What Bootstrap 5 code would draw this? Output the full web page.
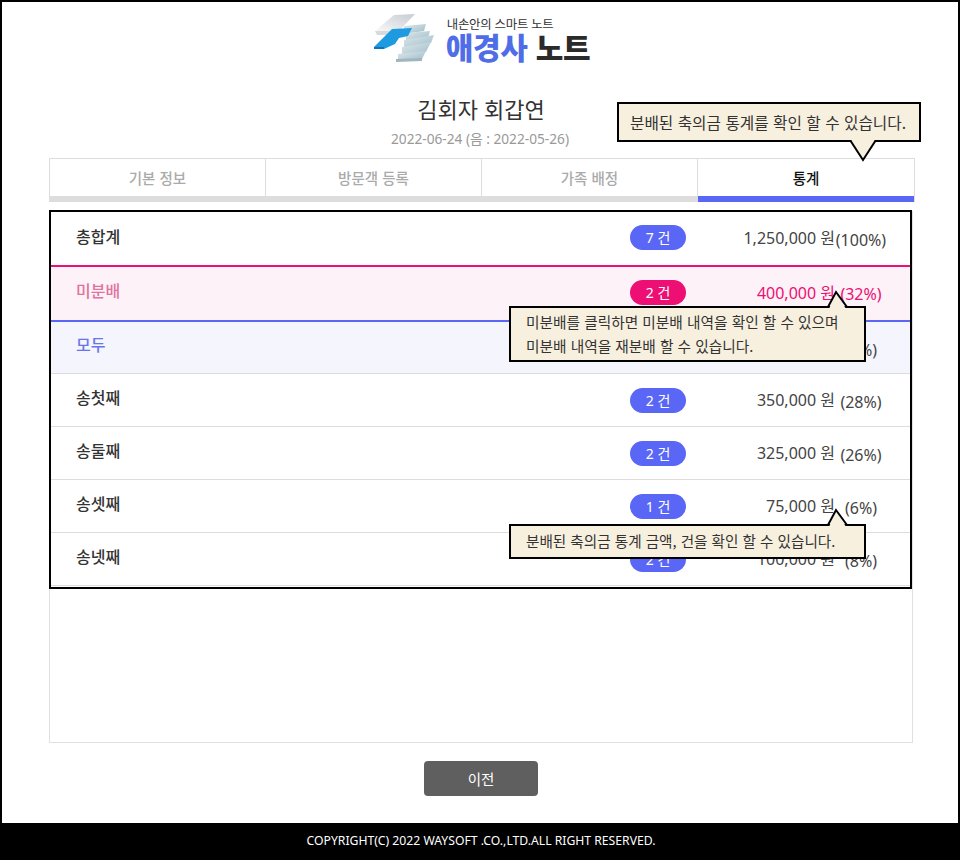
<!DOCTYPE html>
<html lang="ko">
<head>
<meta charset="utf-8">
<title>애경사 노트</title>
<link rel="stylesheet" href="https://cdn.jsdelivr.net/npm/bootstrap@5.3.0/dist/css/bootstrap.min.css">
<style>
html,body{height:860px;overflow:hidden}
body{font-family:"Noto Sans","Noto Sans CJK KR",sans-serif;color:#333;background:#fff}
.shell{position:relative;height:860px;border:solid #000;border-width:2px 2px 0 2px;display:flex;flex-direction:column}
.brand{height:54px;margin-top:10px;gap:9px;padding-left:4px}
.brand-sub{font-size:12.4px;line-height:14px;color:#333;letter-spacing:-.2px;padding-left:1px}
.brand-name{font-size:30px;line-height:30px;font-weight:900;color:#4f6de6;letter-spacing:-.3px;font-family:"Noto Sans CJK KR",sans-serif;margin-top:-1px}
.brand-name span{color:#2b2b2b}
.heading{margin-top:27px;padding-left:2px;font-size:22px;line-height:30px;font-weight:400;color:#333;font-family:"Noto Sans CJK KR",sans-serif}
.dateline{font-size:13.7px;line-height:18px;color:#999;margin-top:7px;margin-bottom:10px}
.stage{margin-left:47px;width:866px}
.tabbar{height:44px;border-top:1px solid #ddd;border-left:1px solid #ddd;border-right:1px solid #ddd}
.tab-cell{flex:0 0 25%;text-align:center;font-size:14.5px;font-weight:500;color:#aaa;border-right:1px solid #ddd;border-bottom:6px solid #ddd;line-height:37px;font-family:"Noto Sans CJK KR",sans-serif}
.tab-cell:last-child{border-right:0;color:#111;border-bottom-color:#5a66f5}
.panel{margin-top:9px;width:864px;height:532px;border:1px solid #e0e0e0;border-top:0}
.stat-row{height:53px;padding:0 25px 0 26px;border-bottom:1px solid #ddd;display:flex;align-items:center}
.stat-label{flex:1;font-size:16px;font-weight:500;color:#333;font-family:"Noto Sans CJK KR",sans-serif;margin-top:-7px}
.pill{width:56px;height:25px;line-height:25px;border-radius:13px;background:#5a66f5;color:#fff;text-align:center;font-size:14px}
.amount{width:149px;text-align:right;font-size:16px;white-space:nowrap;color:#444}
.pct{width:52px;text-align:center;font-size:16px;white-space:nowrap;color:#444;margin-top:4px}
.first-row{border-bottom:0;height:54px}
.first-row .stat-label{margin-top:-5px}
.first-row .pill{margin-top:-1px}
.pink-row{background:#fcf2f7;border-top:2px solid #ed0f73;border-bottom:0;height:55px;padding-bottom:2px}
.pink-row .amount,.pink-row .pct{color:#ed0f73}
.pink-row .pct{margin-top:2px}
.pink-row .stat-label{color:#e0739f;margin-top:-5px}
.pink-row .pill{background:#ed0f73;margin-top:-1px}
.blue-row{background:#f4f5fd;border-top:2px solid #5a66f5;height:54px}
.blue-row .stat-label{color:#6a74ea}
.spot{position:absolute;left:47px;top:208px;width:863px;height:379px;border:2px solid #000;pointer-events:none}
.tip{position:absolute;background:#f8f0df;border:2px solid #000;color:#333;white-space:nowrap;font-family:"Noto Sans CJK KR",sans-serif}
.tip svg{position:absolute;display:block}
.tip-top{left:615px;top:100px;width:304px;height:40px;line-height:37px;padding-left:11px;font-size:15.7px}
.tip-top svg{left:230px;top:36px}
.tip-mid{left:507px;top:304px;width:357px;height:56px;padding:2px 0 0 15px;line-height:24px;font-size:14.7px}
.tip-mid svg{left:315px;top:-19px}
.tip-low{left:507px;top:522px;width:357px;height:35px;line-height:29px;padding-left:15px;font-size:14.6px}
.tip-low svg{left:315px;top:-19px}
.prev-wrap{margin-top:18px;padding-left:2px}
.btn-prev{width:114px;height:35px;line-height:35px;padding:0;background:#5f5f5f;border:0;color:#fff;font-size:14.5px;border-radius:4px;font-family:"Noto Sans CJK KR",sans-serif}
.foot{margin-top:auto;height:37px;line-height:36px;background:#000;color:#fff;font-size:12.2px;text-align:center;padding-left:2px}
</style>
</head>
<body>
<div class="shell">
  <header class="brand d-flex justify-content-center align-items-center">
    <svg width="63" height="50" viewBox="0 0 63 50" aria-hidden="true">
      <defs>
        <linearGradient id="sheet" x1="0" y1="1" x2="1" y2="0"><stop offset="0" stop-color="#f8f9fa"/><stop offset="1" stop-color="#c6ccd2"/></linearGradient>
        <linearGradient id="layer" x1="0" y1="0" x2="1" y2="1"><stop offset="0" stop-color="#dfe8ec"/><stop offset="1" stop-color="#9dbcc7"/></linearGradient>
      </defs>
      <polygon points="30,12 52,10 50,17 30,20" fill="url(#layer)"/>
      <polygon points="32,19 56,17 54,24 32,27" fill="url(#layer)"/>
      <polygon points="30,26 60,21 57,29 30,34" fill="url(#layer)"/>
      <polygon points="28,33 57,28 52,38 28,42" fill="url(#layer)"/>
      <polygon points="24,40 52,37 48,45 24,47" fill="url(#layer)"/>
      <polygon points="22,45 48,44 48,47 22,48" fill="#9fb6bf"/>
      <polygon points="1,17 20,1 41,0 25,17" fill="url(#sheet)"/>
      <polygon points="1,17 25,17 23,21 3,21" fill="#d5dade"/>
      <polygon points="0,33 18,15 38,14 34,22 25,24 21,30 10,35 0,35" fill="#1e9be0"/>
      <polygon points="0,33 10,33 10,35 0,35" fill="#0f73b8"/>
    </svg>
    <div>
      <div class="brand-sub">내손안의 스마트 노트</div>
      <div class="brand-name">애경사 <span>노트</span></div>
    </div>
  </header>
  <div class="text-center heading">김회자 회갑연</div>
  <div class="text-center dateline">2022-06-24 (음 : 2022-05-26)</div>
  <main class="stage">
    <div class="tabbar d-flex">
      <div class="tab-cell">기본 정보</div>
      <div class="tab-cell">방문객 등록</div>
      <div class="tab-cell">가족 배정</div>
      <div class="tab-cell">통계</div>
    </div>
    <div class="panel">
      <div class="stat-row first-row"><div class="stat-label">총합계</div><div class="pill">7 건</div><div class="amount">1,250,000 원</div><div class="pct">(100%)</div></div>
      <div class="stat-row pink-row"><div class="stat-label">미분배</div><div class="pill">2 건</div><div class="amount">400,000 원</div><div class="pct">(32%)</div></div>
      <div class="stat-row blue-row"><div class="stat-label">모두</div><div class="pill">1 건</div><div class="amount">100,000 원</div><div class="pct">(6%)</div></div>
      <div class="stat-row"><div class="stat-label">송첫째</div><div class="pill">2 건</div><div class="amount">350,000 원</div><div class="pct">(28%)</div></div>
      <div class="stat-row"><div class="stat-label">송둘째</div><div class="pill">2 건</div><div class="amount">325,000 원</div><div class="pct">(26%)</div></div>
      <div class="stat-row"><div class="stat-label">송셋째</div><div class="pill">1 건</div><div class="amount">75,000 원</div><div class="pct">(6%)</div></div>
      <div class="stat-row"><div class="stat-label">송넷째</div><div class="pill">2 건</div><div class="amount">100,000 원</div><div class="pct">(8%)</div></div>
    </div>
  </main>
  <div class="prev-wrap text-center"><button type="button" class="btn btn-prev">이전</button></div>
  <footer class="foot">COPYRIGHT(C) 2022 WAYSOFT .CO.,LTD.ALL RIGHT RESERVED.</footer>
  <div class="spot"></div>
  <div class="tip tip-top">분배된 축의금 통계를 확인 할 수 있습니다.
    <svg width="28" height="23" viewBox="0 0 28 23"><polygon points="2,0 14,20 26,0" fill="#f8f0df"/><polyline points="1,0 14,20 27,0" fill="none" stroke="#000" stroke-width="2"/></svg>
  </div>
  <div class="tip tip-mid">미분배를 클릭하면 미분배 내역을 확인 할 수 있으며<br>미분배 내역을 재분배 할 수 있습니다.
    <svg width="24" height="21" viewBox="0 0 24 21"><polygon points="3,20 10,3 20,20" fill="#f8f0df"/><polyline points="0,18 2,18 10,3 21,18 24,18" fill="none" stroke="#000" stroke-width="2"/></svg>
  </div>
  <div class="tip tip-low">분배된 축의금 통계 금액, 건을 확인 할 수 있습니다.
    <svg width="24" height="21" viewBox="0 0 24 21"><polygon points="3,20 10,3 20,20" fill="#f8f0df"/><polyline points="0,18 2,18 10,3 21,18 24,18" fill="none" stroke="#000" stroke-width="2"/></svg>
  </div>
</div>
<script src="https://cdn.jsdelivr.net/npm/bootstrap@5.3.0/dist/js/bootstrap.bundle.min.js"></script>
</body>
</html>
